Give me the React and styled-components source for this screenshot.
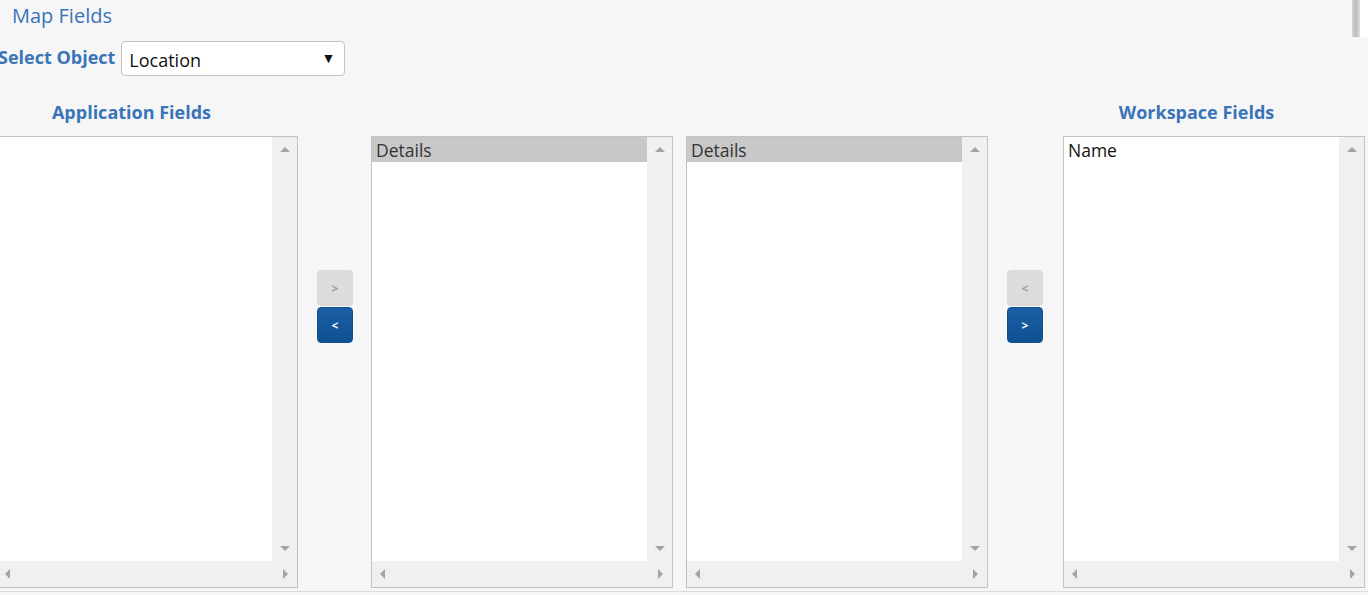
import React from "react";
import styled, { createGlobalStyle } from "styled-components";

const GlobalStyle = createGlobalStyle`
  html, body {
    margin: 0;
    padding: 0;
    background: #f6f6f6;
    font-family: "Open Sans", "Noto Sans", sans-serif;
  }
`;

const Page = styled.div`
  position: relative;
  width: 1368px;
  height: 595px;
  overflow: hidden;
  background: #f6f6f6;
`;

const Panel = styled.div`
  width: 1368px;
  height: 592px;
  border-bottom: 1px solid #dcdcdc;
  padding-top: 4px;
  box-sizing: border-box;
`;

const OuterScroll = styled.div`
  position: absolute;
  top: 0;
  right: 0;
  width: 16px;
  height: 37px;
  display: flex;

  .thumb {
    width: 8px;
    background: linear-gradient(to right, #d4d4d4, #bcbcbc 50%, #e0e0e0);
  }
  .edge {
    flex: 1;
    background: #ffffff;
  }
`;

const Title = styled.div`
  margin-left: 12px;
  height: 24px;
  line-height: 24px;
  font-size: 20px;
  color: #3a74b8;
`;

const SelectRow = styled.div`
  display: flex;
  align-items: center;
  gap: 6px;
  margin-top: 13px;
  margin-left: -2px;
`;

const Label = styled.label`
  font-size: 18px;
  font-weight: 700;
  color: #3a74b8;
  margin-bottom: 4px;
`;

const SelectBox = styled.div`
  width: 224px;
  height: 35px;
  box-sizing: border-box;
  background: #fff;
  border: 1px solid #c4c4c4;
  border-radius: 4px;
  display: flex;
  align-items: center;
  justify-content: space-between;
  padding: 2px 9px 0 7px;
  font-size: 18px;
  color: #111;

  .caret {
    font-size: 14px;
    color: #111;
    margin-top: -4px;
  }
`;

const Columns = styled.div`
  display: flex;
  margin-top: 24px;
  margin-left: -4px;
`;

const Column = styled.div`
  display: flex;
  flex-direction: column;
  flex-shrink: 0;
  width: 302px;
  margin-left: ${(p) => p.$gap || 0}px;
`;

const Heading = styled.div`
  height: 24px;
  line-height: 24px;
  margin-bottom: 12px;
  font-size: 18px;
  font-weight: 700;
  color: #3a74b8;
  text-align: center;
  padding-right: ${(p) => p.$shift || 0}px;
`;

const ListBox = styled.div`
  height: 452px;
  box-sizing: border-box;
  border: 1px solid #c2c2c2;
  background: #fff;
  display: grid;
  grid-template-columns: 1fr 25px;
  grid-template-rows: 1fr 26px;
  overflow: hidden;
`;

const Items = styled.div`
  font-size: 17.5px;
  color: #333;
`;

const Item = styled.div`
  height: 25px;
  line-height: 26px;
  padding-left: 4px;
  background: ${(p) => (p.$selected ? "#c8c8c8" : "transparent")};
  color: ${(p) => (p.$selected ? "#333" : "#111")};
`;

const VBar = styled.div`
  background: #f0f0f0;
  display: flex;
  flex-direction: column;
  justify-content: space-between;
  align-items: center;
  padding: 10px 0 10px;
`;

const HBar = styled.div`
  grid-column: 1 / span 2;
  background: #f0f0f0;
  display: flex;
  justify-content: space-between;
  align-items: center;
  padding: 0 9px 0 8px;
`;

const Arrow = styled.span`
  width: 0;
  height: 0;
  border-style: solid;
  ${(p) =>
    p.$dir === "up"
      ? "border-width: 0 5px 5px 5px; border-color: transparent transparent #a3a3a3 transparent;"
      : p.$dir === "down"
      ? "border-width: 5px 5px 0 5px; border-color: #a3a3a3 transparent transparent transparent;"
      : p.$dir === "left"
      ? "border-width: 5px 5px 5px 0; border-color: transparent #a3a3a3 transparent transparent;"
      : "border-width: 5px 0 5px 5px; border-color: transparent transparent transparent #a3a3a3;"}
`;

const ButtonStack = styled.div`
  display: flex;
  flex-direction: column;
  flex-shrink: 0;
  gap: 1px;
  padding-top: 170px;
  margin-left: ${(p) => p.$gap}px;
`;

const MoveButton = styled.button`
  width: 36px;
  height: 36px;
  border-radius: 4px;
  font-family: "Open Sans", sans-serif;
  font-size: 12px;
  font-weight: 700;
  padding: 0;
  cursor: pointer;
  border: 1px solid ${(p) => (p.disabled ? "#dadada" : "#124f8f")};
  background: ${(p) =>
    p.disabled ? "#dcdcdc" : "linear-gradient(#1b5fa5, #0f4f92)"};
  color: ${(p) => (p.disabled ? "#9a9a9a" : "#fff")};
`;

const List = ({ items = [], selected }) => (
  <ListBox>
    <Items>
      {items.map((it) => (
        <Item key={it} $selected={it === selected}>
          {it}
        </Item>
      ))}
    </Items>
    <VBar>
      <Arrow $dir="up" />
      <Arrow $dir="down" />
    </VBar>
    <HBar>
      <Arrow $dir="left" />
      <Arrow $dir="right" />
    </HBar>
  </ListBox>
);

export default function App() {
  return (
    <Page>
      <GlobalStyle />
      <OuterScroll>
        <div className="thumb" />
        <div className="edge" />
      </OuterScroll>
      <Panel>
        <Title>Map Fields</Title>
        <SelectRow>
          <Label>Select Object</Label>
          <SelectBox>
            <span>Location</span>
            <span className="caret">▼</span>
          </SelectBox>
        </SelectRow>
        <Columns>
          <Column>
            <Heading $shift={31}>Application Fields</Heading>
            <List />
          </Column>
          <ButtonStack $gap={19}>
            <MoveButton disabled>&gt;</MoveButton>
            <MoveButton>&lt;</MoveButton>
          </ButtonStack>
          <Column $gap={18}>
            <Heading>&nbsp;</Heading>
            <List items={["Details"]} selected="Details" />
          </Column>
          <Column $gap={13}>
            <Heading>&nbsp;</Heading>
            <List items={["Details"]} selected="Details" />
          </Column>
          <ButtonStack $gap={19}>
            <MoveButton disabled>&lt;</MoveButton>
            <MoveButton>&gt;</MoveButton>
          </ButtonStack>
          <Column $gap={20}>
            <Heading $shift={35}>Workspace Fields</Heading>
            <List items={["Name"]} />
          </Column>
        </Columns>
      </Panel>
    </Page>
  );
}
